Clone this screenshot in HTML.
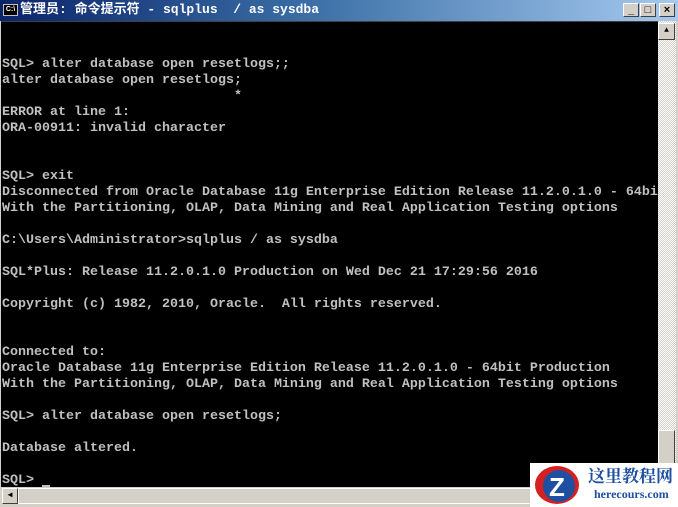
<!DOCTYPE html>
<html><head><meta charset="utf-8"><style>
*{margin:0;padding:0;box-sizing:border-box}
body{width:678px;height:507px;overflow:hidden;background:#d4d0c8;position:relative;font-family:"Liberation Mono",monospace}
#title{position:absolute;left:0;top:0;width:678px;height:21px;background:linear-gradient(90deg,#0a246a 0%,#3a6ea5 45%,#a6caf0 100%);}
#title .t{position:absolute;left:20px;top:2px;color:#fff;font:bold 13px "Liberation Mono","Noto Sans CJK SC",monospace;white-space:pre;line-height:16px}
#ico{position:absolute;left:3px;top:4px;width:15px;height:12px;background:#000;border:1px solid #c0c0c0;color:#fff;font:bold 7px "Liberation Sans",sans-serif;line-height:10px;text-align:center}
.btn{position:absolute;top:3px;width:16px;height:14px;background:#d4d0c8;border:1px solid;border-color:#fff #404040 #404040 #fff;font:bold 11px "Liberation Sans",sans-serif;text-align:center;line-height:12px;color:#000}
#term{position:absolute;left:1px;top:21px;width:657px;height:466px;background:#000;border-top:1px solid #404040;overflow:hidden}
#term pre{position:absolute;left:1px;top:3px;color:#c0c0c0;font:bold 13.33px/16px "Liberation Mono",monospace;white-space:pre}
#vs{position:absolute;left:658px;top:21px;width:18px;height:466px;background:repeating-conic-gradient(#fff 0 25%,#d4d0c8 0 50%) 0 0/2px 2px}
#hs{position:absolute;left:1px;top:487px;width:657px;height:17px;background:#d4d0c8}
.sb{position:absolute;background:#d4d0c8;border:1px solid;border-color:#fff #404040 #404040 #fff}
#wm{position:absolute;left:530px;top:463px;width:148px;height:44px;background:#fff}
</style></head><body>
<div id="title"><div id="ico">C:\</div><div class="t">管理员: 命令提示符 - sqlplus  / as sysdba</div>
<div class="btn" style="left:623px">_</div><div class="btn" style="left:640px">□</div><div class="btn" style="left:659px">×</div></div>
<div id="term"><pre>


SQL&gt; alter database open resetlogs;;
alter database open resetlogs;
                             *
ERROR at line 1:
ORA-00911: invalid character


SQL&gt; exit
Disconnected from Oracle Database 11g Enterprise Edition Release 11.2.0.1.0 - 64bi
With the Partitioning, OLAP, Data Mining and Real Application Testing options

C:\Users\Administrator&gt;sqlplus / as sysdba

SQL*Plus: Release 11.2.0.1.0 Production on Wed Dec 21 17:29:56 2016

Copyright (c) 1982, 2010, Oracle.  All rights reserved.


Connected to:
Oracle Database 11g Enterprise Edition Release 11.2.0.1.0 - 64bit Production
With the Partitioning, OLAP, Data Mining and Real Application Testing options

SQL&gt; alter database open resetlogs;

Database altered.

SQL&gt; </pre><div style="position:absolute;left:41px;top:463px;width:8px;height:3px;background:#c0c0c0"></div></div>
<div id="vs"><div class="sb" style="left:0;top:2px;width:17px;height:17px;font-size:8px;text-align:center;line-height:14px">▲</div><div class="sb" style="left:0;top:409px;width:17px;height:60px"></div></div>
<div id="hs"><div class="sb" style="left:1px;top:1px;width:16px;height:16px;font-size:8px;text-align:center;line-height:14px">◀</div><div class="sb" style="left:17px;top:1px;width:640px;height:16px;border-color:#fff #fff #fff #fff"></div></div>
<div id="wm">
<svg width="50" height="44" style="position:absolute;left:2px;top:0"><ellipse cx="25" cy="22" rx="22" ry="19" fill="#d42020"/><circle cx="27" cy="23" r="16" fill="#1e4fa0"/><text x="17" y="33" fill="#fff" font-family="Liberation Sans" font-weight="bold" font-size="26">Z</text></svg>
<div style="position:absolute;left:58px;top:2px;color:#1e4fa0;font:bold 17px 'Noto Serif CJK SC',serif;line-height:20px;white-space:nowrap">这里教程网</div>
<div style="position:absolute;left:64px;top:24px;color:#1e4fa0;font:bold 12px 'Liberation Serif',serif;white-space:nowrap">herecours.com</div>
</div>
</body></html>
